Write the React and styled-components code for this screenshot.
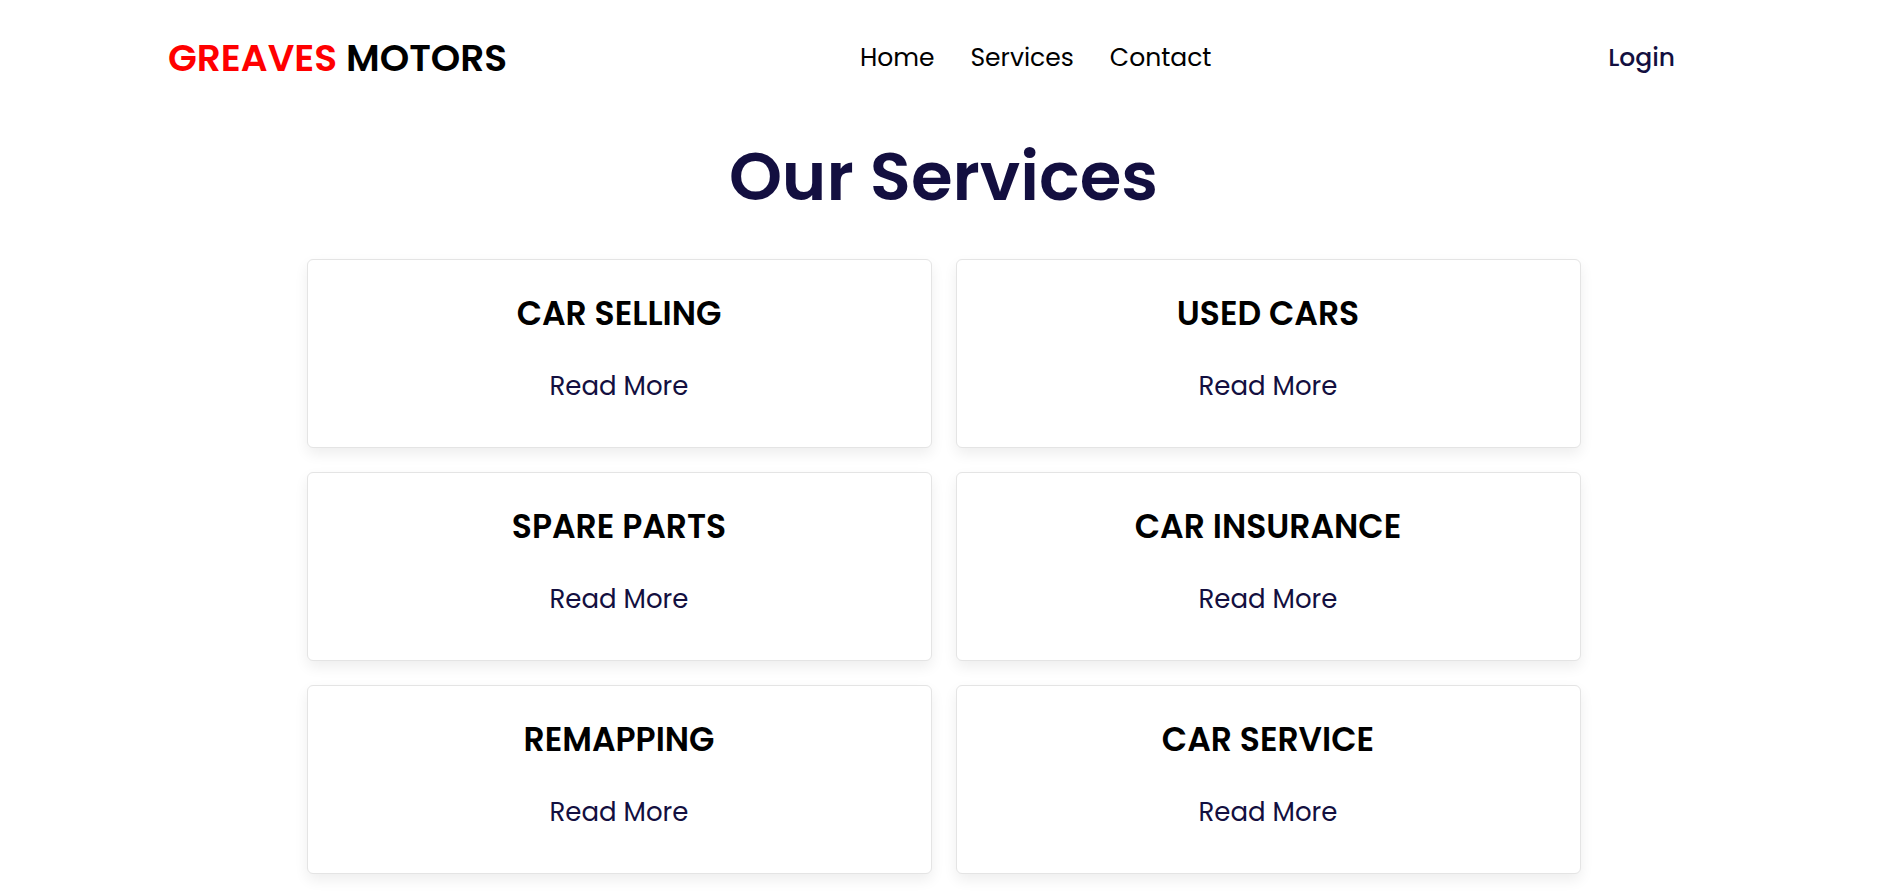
import styled, { createGlobalStyle } from "styled-components";

const GlobalStyle = createGlobalStyle`
  * {
    box-sizing: border-box;
  }
  body {
    margin: 0;
    background: #fff;
    font-family: "Poppins", "Inter", "Noto Sans", sans-serif;
  }
`;

const Header = styled.header`
  height: 116px;
  display: flex;
  align-items: center;
  justify-content: space-between;
  padding: 0 212px 0 168px;
`;

const Logo = styled.a`
  font-size: 37.5px;
  font-weight: 600;
  color: #000;
  text-decoration: none;

  span {
    color: #ff0000;
  }
`;

const Nav = styled.nav`
  display: flex;
  gap: 36px;
  margin-right: 44px;
`;

const NavLink = styled.a`
  font-size: 25px;
  font-weight: 400;
  color: #000;
  text-decoration: none;
`;

const Login = styled.a`
  font-size: 25px;
  font-weight: 500;
  color: #130f40;
  text-decoration: none;
`;

const Title = styled.h1`
  margin: 27px 0 48px;
  text-align: center;
  font-size: 67.5px;
  line-height: 1;
  font-weight: 600;
  color: #130f40;
`;

const ServicesGrid = styled.section`
  display: grid;
  grid-template-columns: repeat(2, 625px);
  gap: 24px;
  justify-content: center;
  padding-bottom: 40px;
`;

const Card = styled.div`
  height: 189px;
  padding-top: 29px;
  background: #fff;
  border: 1px solid #e4e4e4;
  border-radius: 6px;
  box-shadow: 0 6px 14px rgba(0, 0, 0, 0.07);
  text-align: center;
`;

const CardTitle = styled.h3`
  margin: 0 0 28px;
  font-size: 33px;
  font-weight: 600;
  color: #000;
`;

const ReadMore = styled.a`
  font-size: 26px;
  font-weight: 400;
  color: #130f40;
  text-decoration: none;
`;

const services = [
  "CAR SELLING",
  "USED CARS",
  "SPARE PARTS",
  "CAR INSURANCE",
  "REMAPPING",
  "CAR SERVICE",
];

export default function App() {
  return (
    <>
      <GlobalStyle />
      <Header>
        <Logo href="#">
          <span>GREAVES</span> MOTORS
        </Logo>
        <Nav>
          <NavLink href="#">Home</NavLink>
          <NavLink href="#">Services</NavLink>
          <NavLink href="#">Contact</NavLink>
        </Nav>
        <Login href="#">Login</Login>
      </Header>

      <Title>Our Services</Title>

      <ServicesGrid>
        {services.map((name) => (
          <Card key={name}>
            <CardTitle>{name}</CardTitle>
            <ReadMore href="#">Read More</ReadMore>
          </Card>
        ))}
      </ServicesGrid>
    </>
  );
}
